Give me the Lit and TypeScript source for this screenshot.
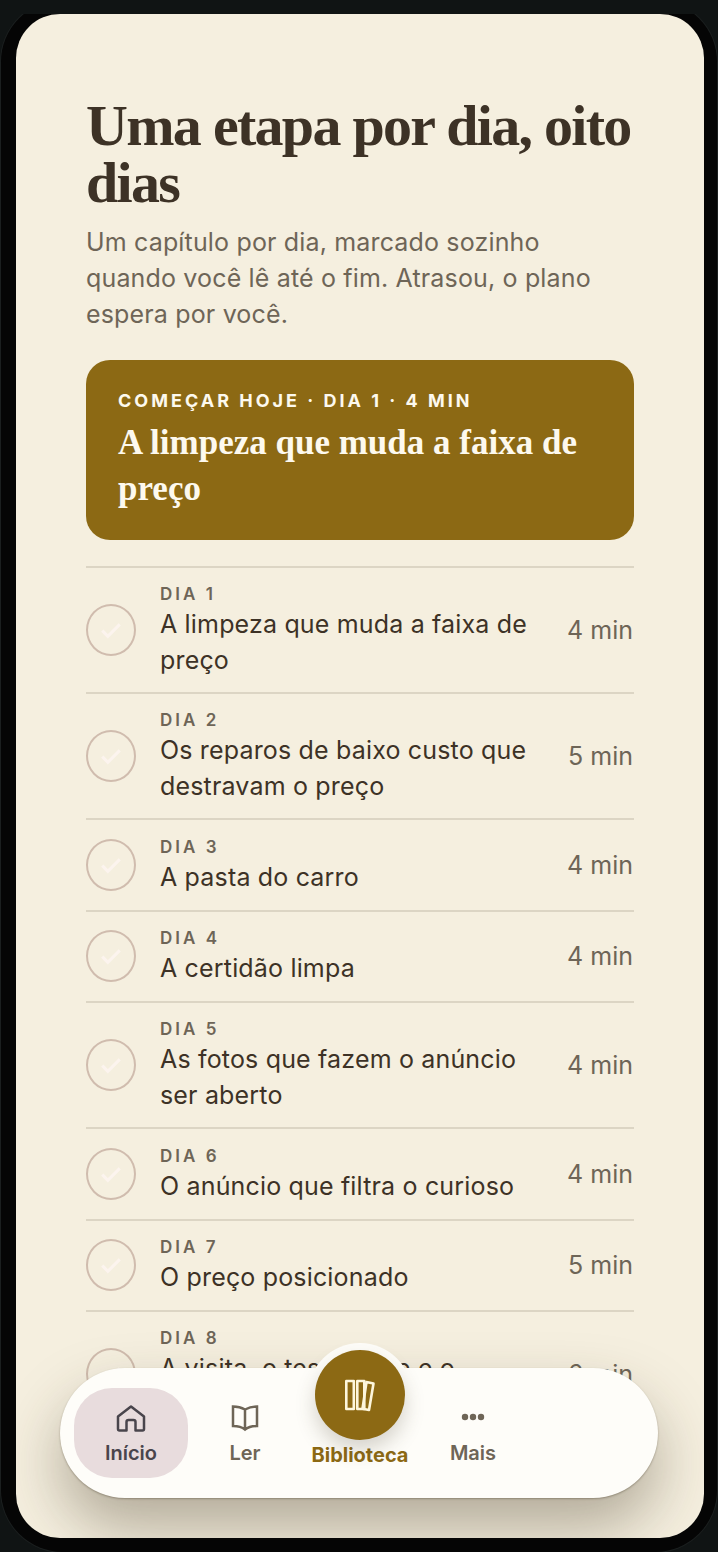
import { LitElement, html, css, svg } from 'lit';
import { customElement } from 'lit/decorators.js';

const days = [
  { n: 1, title: 'A limpeza que muda a faixa de preço', min: 4 },
  { n: 2, title: 'Os reparos de baixo custo que destravam o preço', min: 5 },
  { n: 3, title: 'A pasta do carro', min: 4 },
  { n: 4, title: 'A certidão limpa', min: 4 },
  { n: 5, title: 'As fotos que fazem o anúncio ser aberto', min: 4 },
  { n: 6, title: 'O anúncio que filtra o curioso', min: 4 },
  { n: 7, title: 'O preço posicionado', min: 5 },
  { n: 8, title: 'A visita, o teste drive e o fechamento', min: 6 },
];

const check = svg`<path d="M5 12.5l4.5 4.5L19 7.5" />`;

@customElement('app-root')
export class AppRoot extends LitElement {
  static styles = css`
    :host {
      display: block;
      height: 1552px;
      overflow: hidden;
      background: #101414;
      font-family: Inter, 'Liberation Sans', sans-serif;
    }
    .frame {
      position: relative;
      height: 1552px;
      margin: 0 1px;
      padding: 14px 13px 0 15px;
      background: #050505;
      border-radius: 62px;
      box-shadow: 0 0 0 1px #1b1f1f;
      box-sizing: border-box;
    }
    /* status strip that sits over the top of the bezel */
    .frame::before {
      content: '';
      position: absolute;
      left: -1px;
      right: -1px;
      top: 0;
      height: 14px;
      background: #101414;
    }
    .screen {
      position: relative;
      height: 1524px;
      background: #f5efdf;
      border-radius: 44px;
      overflow: hidden;
    }
    .content {
      padding: 83px 70px 0;
      height: 100%;
      overflow: hidden;
      box-sizing: border-box;
    }
    h1 {
      margin: 0;
      font: 700 58px/57px 'Liberation Serif', serif;
      letter-spacing: -1.7px;
      color: #3d3226;
    }
    .lead {
      margin: 13px 0 0;
      max-width: 520px;
      font-size: 25px;
      line-height: 36px;
      letter-spacing: 0.16px;
      color: #6e6557;
    }
    .cta {
      margin-top: 28px;
      height: 180px;
      padding: 29px 32px 0;
      box-sizing: border-box;
      border-radius: 24px;
      background: #8c6914;
      color: #fdf9ee;
    }
    .cta-kicker {
      font-size: 18px;
      line-height: 24px;
      font-weight: 700;
      letter-spacing: 3px;
    }
    .cta-title {
      font: 700 35px/46px 'Liberation Serif', serif;
      margin-top: 7px;
    }
    .list {
      margin-top: 26px;
      border-top: 2px solid #dcd5c4;
    }
    .row {
      display: flex;
      align-items: center;
      min-height: 91.5px;
      padding: 16px 0 14px;
      border-bottom: 2px solid #dcd5c4;
      box-sizing: border-box;
    }
    .tick {
      flex: none;
      width: 50px;
      height: 52px;
      margin-bottom: 2px;
      border: 2px solid #d0bcae;
      border-radius: 50%;
      box-sizing: border-box;
      display: flex;
      align-items: center;
      justify-content: center;
    }
    .tick svg {
      width: 30px;
      height: 30px;
      fill: none;
      stroke: #fcf4ee;
      stroke-width: 2.5;
    }
    .body {
      flex: 1;
      margin-left: 24px;
      min-width: 0;
    }
    .day {
      font-size: 17px;
      line-height: 20px;
      font-weight: 600;
      letter-spacing: 3px;
      color: #6e6557;
      margin-bottom: 3px;
    }
    .name {
      font-size: 25px;
      line-height: 35.5px;
      letter-spacing: 0.17px;
      color: #3d3226;
      max-width: 376px;
    }
    .min {
      flex: none;
      font-size: 25px;
      margin: 0 1px 2px 0;
      color: #6e6557;
    }
    nav {
      position: absolute;
      left: 44px;
      top: 1354px;
      width: 598px;
      height: 130px;
      border-radius: 65px;
      background: #fefdf9;
      box-shadow: 0 1px 2px rgba(70, 60, 40, 0.4), 0 30px 60px rgba(60, 50, 30, 0.36);
      display: flex;
      align-items: flex-start;
      padding: 20px 14px;
      box-sizing: border-box;
    }
    .tab {
      width: 114px;
      height: 90px;
      border-radius: 38px;
      display: flex;
      flex-direction: column;
      align-items: center;
      font-size: 20px;
      font-weight: 600;
      color: #6e6557;
      padding-top: 15px;
      box-sizing: border-box;
    }
    .tab svg {
      width: 32px;
      height: 32px;
      fill: none;
      stroke: currentColor;
      stroke-width: 2.5;
    }
    .tab span {
      margin-top: 5px;
      line-height: 26px;
    }
    .tab.active {
      background: #e8dcdd;
      color: #49454c;
    }
    .tab.center {
      position: relative;
      color: #8c6914;
      font-weight: 700;
    }
    .tab.center span {
      margin-top: 39px;
      padding-left: 2px;
      white-space: nowrap;
    }
    .fab {
      position: absolute;
      left: 13px;
      top: -38px;
      width: 90px;
      height: 90px;
      border-radius: 50%;
      background: #8c6914;
      color: #fdf6dc;
      box-shadow: 0 10px 20px rgba(70, 60, 40, 0.22), 0 0 0 7px #fefdf9;
      display: flex;
      align-items: center;
      justify-content: center;
    }
    .tab .fab svg {
      width: 30px;
      height: 34px;
      stroke-width: 2.6;
      stroke-linejoin: round;
    }
  `;

  render() {
    return html`
      <div class="frame">
        <div class="screen">
          <div class="content">
            <h1>Uma etapa por dia, oito dias</h1>
            <p class="lead">Um capítulo por dia, marcado sozinho quando você lê até o fim. Atrasou, o plano espera por você.</p>
            <div class="cta">
              <div class="cta-kicker">COMEÇAR HOJE · DIA 1 · 4 MIN</div>
              <div class="cta-title">A limpeza que muda a faixa de preço</div>
            </div>
            <div class="list">
              ${days.map(d => html`
                <div class="row">
                  <div class="tick"><svg viewBox="0 0 24 24">${check}</svg></div>
                  <div class="body">
                    <div class="day">DIA ${d.n}</div>
                    <div class="name">${d.title}</div>
                  </div>
                  <div class="min">${d.min} min</div>
                </div>
              `)}
            </div>
          </div>
          <nav>
            <div class="tab active">
              <svg viewBox="0 0 32 32" stroke-linejoin="round" stroke-linecap="round"><path d="M3 13.500L16 3.500l13 10V26a1.500 1.500 0 0 1-1.500 1.500h-7V19a2 2 0 0 0-2-2h-5a2 2 0 0 0-2 2v8.500h-7A1.500 1.500 0 0 1 3 26z" /></svg>
              <span>Início</span>
            </div>
            <div class="tab">
              <svg viewBox="0 0 32 32" stroke-linejoin="miter"><path d="M16 6.500C13 4.800 8.500 3.500 4 3.500V23c4.500 0 9 1 12 3.500 3-2.500 7.500-3.500 12-3.500V3.500c-4.500 0-9 1.300-12 3zM16 6.500V26.500" /></svg>
              <span>Ler</span>
            </div>
            <div class="tab center">
              <div class="fab">
                <svg viewBox="0 0 30 34">
                  <rect x="1.300" y="3" width="7.500" height="28" />
                  <rect x="12.300" y="3" width="7" height="28" />
                  <path d="M21.500 4l7 1.500L24 32l-6.500-1.200z" />
                </svg>
              </div>
              <span>Biblioteca</span>
            </div>
            <div class="tab">
              <svg viewBox="0 0 32 32"><g fill="currentColor" stroke="none"><circle cx="8" cy="14" r="3.200" /><circle cx="16" cy="14" r="3.200" /><circle cx="24" cy="14" r="3.200" /></g></svg>
              <span>Mais</span>
            </div>
          </nav>
        </div>
      </div>
    `;
  }
}
